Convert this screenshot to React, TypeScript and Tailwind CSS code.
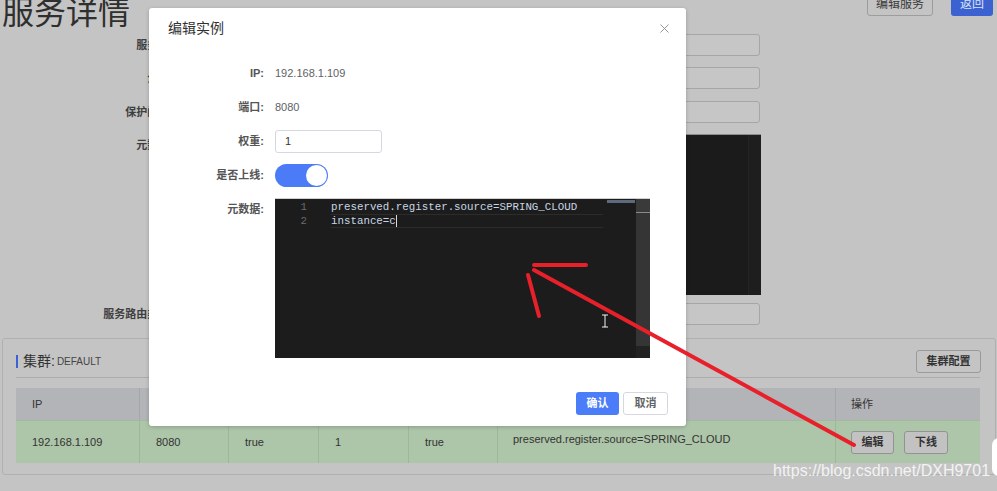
import React from 'react';
import { X } from 'lucide-react';

const FONT = "font-['Liberation_Sans','Noto_Sans_CJK_SC',sans-serif]";
const MONO = "font-['Liberation_Mono','DejaVu_Sans_Mono',monospace]";

function PageField({ label, className = '' }: { label: string; className?: string }) {
  return (
    <div className={`flex items-center h-[22px] ${className}`}>
      <div className="w-[173px] text-right text-[11px] text-[#3f3f3f] font-bold">{label}</div>
      <div className="ml-[12px] w-[575px] h-[22px] rounded-[3px] border border-[#a6a6a6] bg-[#c6c6c6]" />
    </div>
  );
}

function ModalRow({ label, children, top = false }: { label: string; children: React.ReactNode; top?: boolean }) {
  return (
    <div className={`flex ${top ? 'items-start' : 'items-center'}`}>
      <div className="w-[115px] h-[23px] flex items-center justify-end text-[11px] font-bold text-[#555]">{label}</div>
      <div className="ml-[11px] flex items-center min-h-[23px] text-[11px] text-[#606266]">{children}</div>
    </div>
  );
}

const cols = [
  { w: 'w-[124px]', head: 'IP', val: '192.168.1.109' },
  { w: 'w-[89px]', head: '端口', val: '8080' },
  { w: 'w-[90px]', head: '临时实例', val: 'true' },
  { w: 'w-[90px]', head: '权重', val: '1' },
  { w: 'w-[89px]', head: '健康状态', val: 'true' },
  { w: 'w-[338px]', head: '元数据', val: 'preserved.register.source=SPRING_CLOUD' },
];

export default function App() {
  return (
    <div className={`relative w-[997px] h-[491px] overflow-hidden bg-[#c4c4c4] ${FONT} text-[#333]`}>
      {/* page under the dialog */}
      <div className="flex items-start justify-between h-[30px]">
        <h1 className="ml-[2px] mt-[-7px] text-[32px] leading-[40px] text-[#2f2f2f]">服务详情</h1>
        <div className="flex gap-[18px] mr-[4px] mt-[-8px]">
          <button className="h-[24px] w-[66px] rounded-[3px] border border-[#9d9d9d] text-[12px] text-[#3a3a3a]">编辑服务</button>
          <button className="h-[24px] w-[42px] rounded-[3px] bg-[#3b62d0] text-[12px] text-[#dbe3f7]">返回</button>
        </div>
      </div>

      <div className="flex flex-col">
        <PageField label="服务名:" className="mt-[4px]" />
        <PageField label="分组:" className="mt-[11px]" />
        <PageField label="保护阈值:" className="mt-[12px]" />
        <div className="flex items-start mt-[11px]">
          <div className="w-[173px] h-[22px] flex items-center justify-end text-[11px] text-[#3f3f3f] font-bold">元数据:</div>
          <div className="ml-[12px] w-[576px] h-[161px] bg-[#1b1b1b] border-t border-[#8c8c8c] flex justify-end">
            <div className="w-[13px] h-full border-l border-[#242424] bg-[#1e1e1e]" />
          </div>
        </div>
        <PageField label="服务路由类型:" className="mt-[8px]" />
      </div>

      {/* cluster card */}
      <div className="mt-[13px] ml-[2px] w-[994px] h-[137px] rounded-[3px] border border-[#b0b0b0] pl-[13px] pr-[15px]">
        <div className="h-[39px] pt-[6px] flex items-center justify-between border-b border-[#adadad]">
          <div className="flex items-center">
            <span className="w-[2px] h-[13px] bg-[#3b62d0] mr-[5px]" />
            <span className="text-[14px] text-[#333]">集群:</span>
            <span className="ml-[2px] text-[10px] text-[#444]">DEFAULT</span>
          </div>
          <button className="h-[23px] w-[65px] mr-[-1px] rounded-[3px] border border-[#9a9a9a] text-[11px] text-[#333] font-bold">集群配置</button>
        </div>
        <div className="mt-[10px] flex flex-col text-[11px] text-[#333]">
          <div className="flex h-[32px] bg-[#b3b4b8]">
            {cols.map((c, i) => (
              <div key={i} className={`${c.w} flex items-center pl-[16px] border-r border-[#a6a7ab]`}>{c.head}</div>
            ))}
            <div className="flex-1 flex items-center pl-[15px]">操作</div>
          </div>
          <div className="flex h-[43px] bg-[#adc5a8] border-t border-[#a2b99d]">
            {cols.map((c, i) => (
              <div key={i} className={`${c.w} flex ${i === 5 ? 'items-start pt-[10px] pl-[15px]' : 'items-center pl-[16px]'} border-r border-[#9fb69a]`}>{c.val}</div>
            ))}
            <div className="flex-1 flex items-center pl-[15px] gap-[10px]">
              <button className="h-[23px] w-[43px] rounded-[3px] border border-[#939393] bg-[#c2c2c2] text-[11px] font-bold">编辑</button>
              <button className="h-[23px] w-[44px] rounded-[3px] border border-[#939393] bg-[#c2c2c2] text-[11px] font-bold">下线</button>
            </div>
          </div>
        </div>
      </div>

      {/* dialog */}
      <div className="absolute left-[149px] top-[8px] w-[537px] h-[418px] rounded-[3px] bg-white shadow-[0_1px_4px_rgba(0,0,0,0.2)] flex flex-col">
        <div className="h-[40px] flex items-center justify-between pl-[19px] pr-[14px]">
          <span className="text-[14px] text-[#303133]">编辑实例</span>
          <X size={15} strokeWidth={1.4} className="text-[#8a8a8a]" />
        </div>
        <div className="pt-[14px] flex flex-col gap-[11px]">
          <ModalRow label="IP:">192.168.1.109</ModalRow>
          <ModalRow label="端口:">8080</ModalRow>
          <ModalRow label="权重:">
            <div className="w-[107px] h-[23px] rounded-[3px] border border-[#d5d8de] flex items-center pl-[9px] text-[#333]">1</div>
          </ModalRow>
          <ModalRow label="是否上线:">
            <div className="w-[53px] h-[23px] rounded-full bg-[#4b7bf6] flex items-center justify-end pr-[1px]">
              <div className="w-[21px] h-[21px] rounded-full bg-white" />
            </div>
          </ModalRow>
          <ModalRow label="元数据:" top>
            <div className="relative w-[375px] h-[160px] bg-[#1c1c1c] border-t border-[#d0d0d0] flex">
              <div className={`w-[32px] pt-[1px] text-right text-[10.8px] leading-[14px] text-[#6b6b6b] ${MONO}`}>
                <div>1</div>
                <div>2</div>
              </div>
              <div className={`ml-[24px] w-[272px] pt-[1px] text-[10.8px] leading-[14px] text-[#c8d6e4] ${MONO}`}>
                <div className="h-[14px]">preserved.register.source=SPRING_CLOUD</div>
                <div className="h-[14px] border-y border-[#2c2c2c] flex items-center">
                  instance=c<span className="w-[1px] h-[12px] bg-[#d8d8d8]" />
                </div>
              </div>
              <div className="ml-[4px] w-[29px] pt-[1px]">
                <div className="h-[3px] w-[28px] bg-[#5b6a7d]" />
              </div>
              <div className="w-[14px] flex flex-col">
                <div className="h-[14px] bg-[#3a3a3a] border-b border-[#8a8a8a]" />
                <div className="h-[133px] bg-[#353535]" />
                <div className="flex-1 bg-[#222]" />
              </div>
            </div>
          </ModalRow>
        </div>
        <div className="mt-[34px] flex justify-end gap-[4px] pr-[18px]">
          <button className="h-[23px] w-[43px] rounded-[3px] bg-[#4c7df9] text-[11px] text-white font-bold">确认</button>
          <button className="h-[23px] w-[45px] rounded-[3px] border border-[#d5d8de] bg-white text-[11px] text-[#606266] font-bold">取消</button>
        </div>
      </div>

      {/* hand-drawn annotation */}
      <svg className="absolute inset-0 pointer-events-none" width="997" height="491">
        <g stroke="#e8202a" strokeWidth="4" strokeLinecap="round">
          <line x1="534" y1="265" x2="586" y2="265" />
          <line x1="534" y1="270" x2="854" y2="445" />
          <line x1="528" y1="275" x2="539" y2="316" />
        </g>
        <path d="M602 315 h3 v12 h-3 M608 315 h-3 M608 327 h-3" fill="none" stroke="#111" strokeWidth="2.5" />
        <path d="M602 315 h3 v12 h-3 M608 315 h-3 M608 327 h-3" fill="none" stroke="#fff" strokeWidth="1" />
      </svg>

      <div className="absolute left-[992px] top-[438px] w-[14px] h-[38px] rounded-full bg-white" />
      <div className="absolute left-[773px] top-[460px] text-[16px] leading-[22px] text-white/80 font-['Liberation_Sans',sans-serif]">
        https://blog.csdn.net/DXH9701
      </div>
    </div>
  );
}
